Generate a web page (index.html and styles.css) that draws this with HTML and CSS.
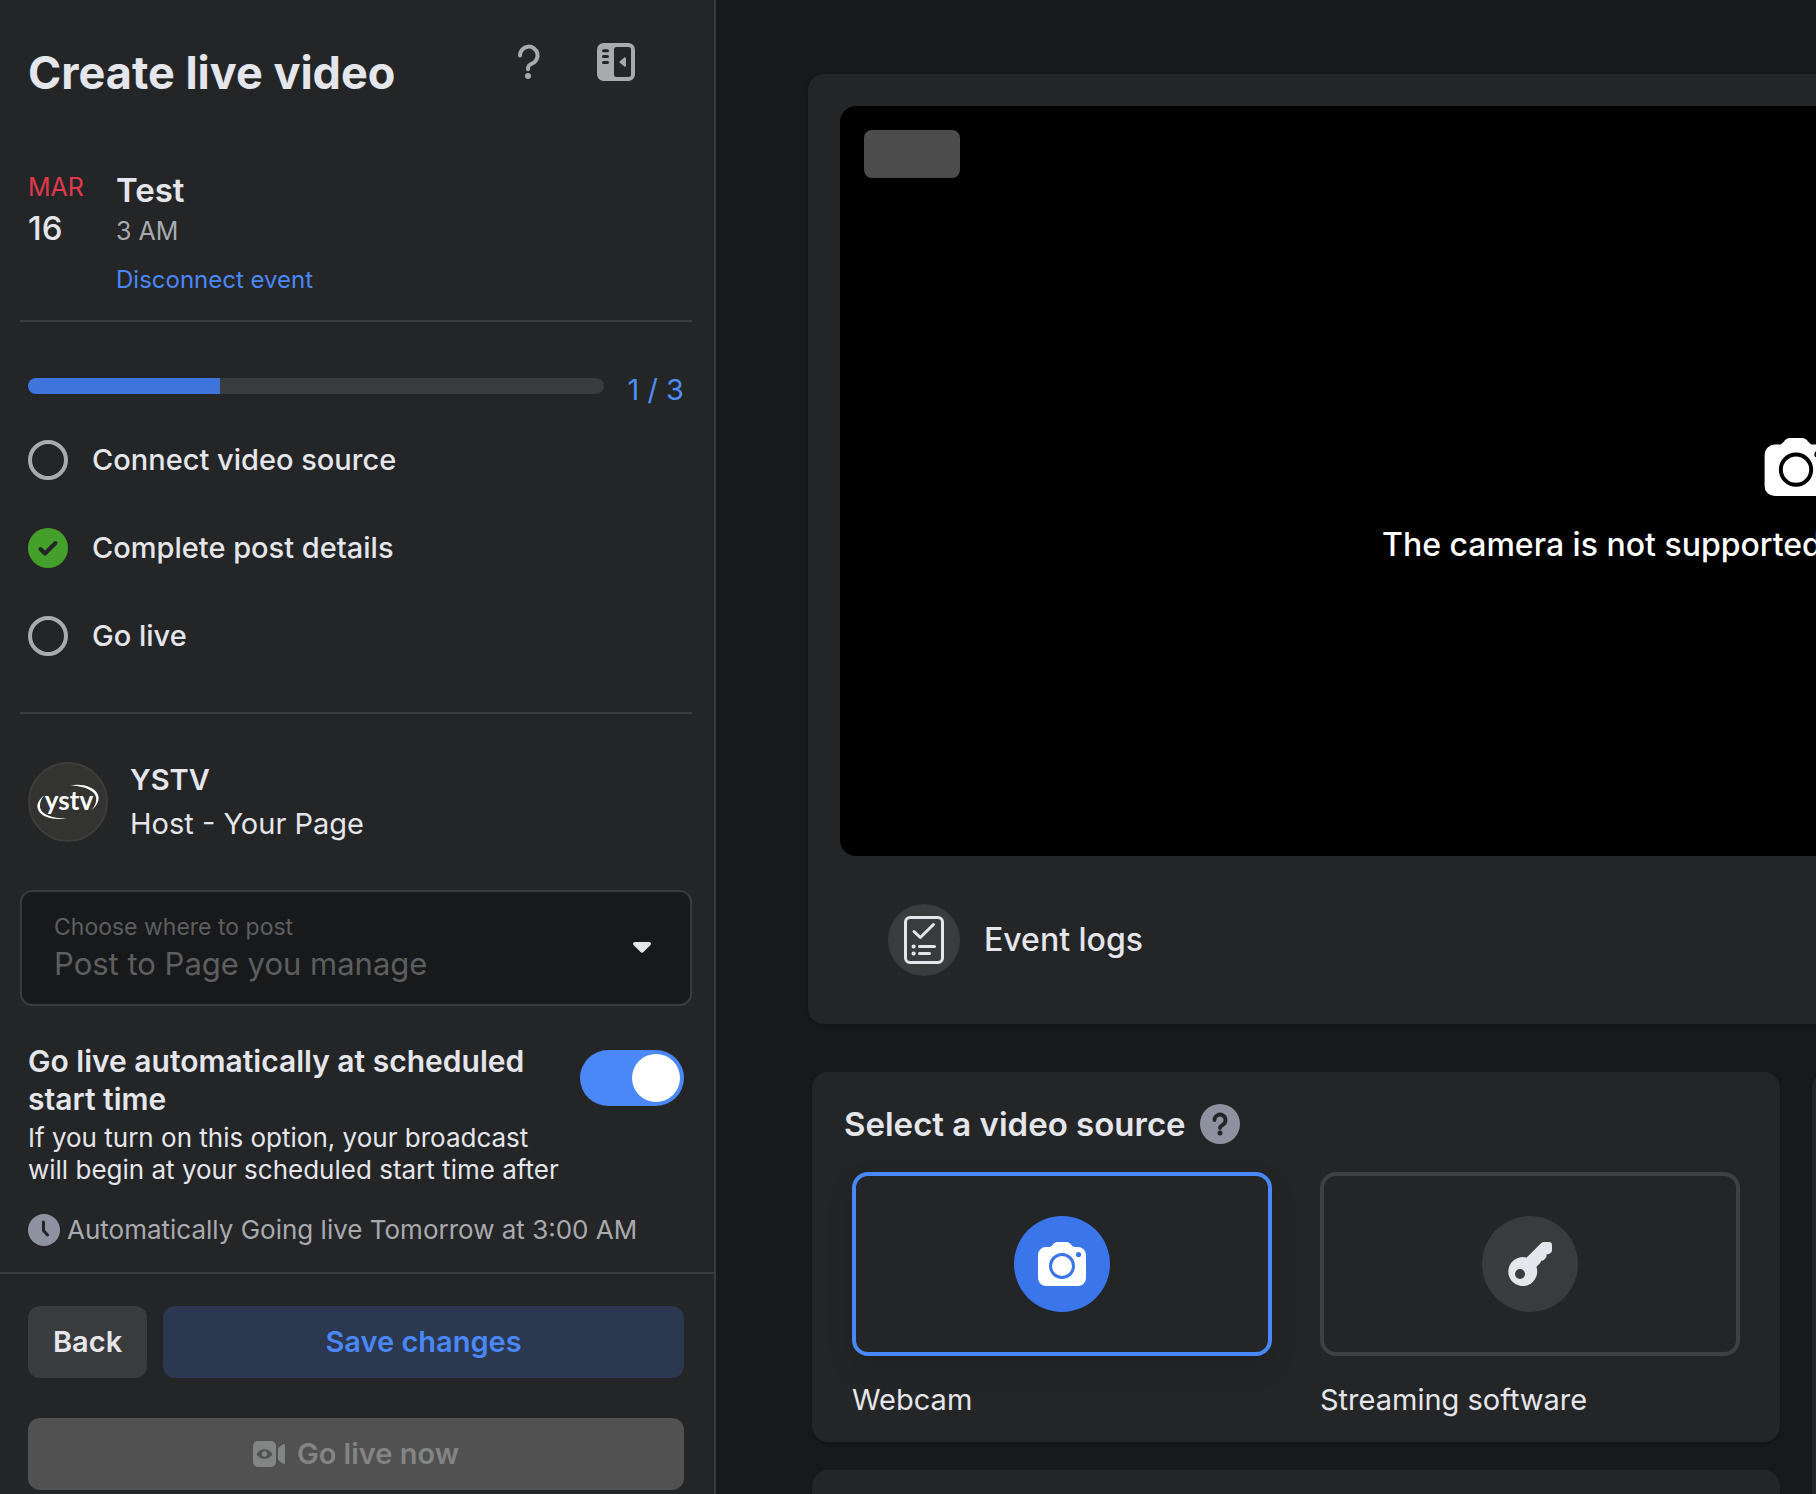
FILE: index.html
```html
<!DOCTYPE html>
<html lang="en">
<head>
<meta charset="utf-8">
<meta name="viewport" content="width=device-width, initial-scale=1">
<title>Create live video</title>
<link rel="stylesheet" href="styles.css">
</head>
<body>
<svg class="sprite" aria-hidden="true">
  <symbol id="icon-camera" viewBox="0 0 48 44">
    <path fill="#fff" d="M8 5h3c1.500 0 2.500-.8 3.500-2C16 1 17.500 0 19.500 0h9c2 0 3.500 1 5 3 1 1.200 2 2 3.500 2h3a8 8 0 0 1 8 8v23a8 8 0 0 1-8 8H8a8 8 0 0 1-8-8V13a8 8 0 0 1 8-8z"/>
    <circle cx="24" cy="24" r="11.500" fill="none" stroke="currentColor" stroke-width="3"/>
    <circle cx="40.500" cy="12.500" r="2.600" fill="currentColor"/>
  </symbol>
</svg>
<div class="shell">
  <aside class="sidebar">
    <header class="sidebar-header">
      <h1 class="title">Create live video</h1>
      <div class="header-actions">
        <button class="icon-button" type="button" aria-label="Help">
          <svg width="40" height="40" viewBox="0 0 40 40" aria-hidden="true">
            <path d="M12 13.500a8.800 8.800 0 1 1 11.500 8.300c-2.400.9-3.500 1.800-3.500 5.400" fill="none" stroke="#a8aab0" stroke-width="4" stroke-linecap="round"/>
            <circle cx="20" cy="34" r="3" fill="#a8aab0"/>
          </svg>
        </button>
        <button class="icon-button" type="button" aria-label="Collapse panel">
          <svg width="38" height="38" viewBox="0 0 38 38" aria-hidden="true">
            <rect width="38" height="38" rx="6.500" fill="#a8aab0"/>
            <rect x="17" y="4" width="17" height="30" rx="2.500" fill="#242526"/>
            <path d="M6.500 7.700h4M6.500 13.600h4M6.500 19.600h4" stroke="#242526" stroke-width="3" stroke-linecap="round"/>
            <path d="M28 15.300v7.400L23.500 19z" fill="#a8aab0" stroke="#a8aab0" stroke-width="2" stroke-linejoin="round"/>
          </svg>
        </button>
      </div>
    </header>

    <section class="event">
      <div class="event-date">
        <div class="event-month">MAR</div>
        <div class="event-day">16</div>
      </div>
      <div class="event-info">
        <h2 class="event-name">Test</h2>
        <div class="event-time">3 AM</div>
        <a class="event-link" href="#">Disconnect event</a>
      </div>
    </section>

    <section class="progress-section">
      <div class="progress-row">
        <div class="progress" role="progressbar" aria-label="Setup steps" aria-valuemin="0" aria-valuemax="3" aria-valuenow="1">
          <div class="progress-fill" style="width: 33.33%"></div>
        </div>
        <span class="progress-count">1 / 3</span>
      </div>
      <ul class="steps">
        <li class="step"><span class="step-ring"></span>Connect video source</li>
        <li class="step">
          <svg width="40" height="40" viewBox="0 0 40 40" aria-hidden="true">
            <circle cx="20" cy="20" r="20" fill="#45a02b"/>
            <path d="M12.500 21l4.500 4.500L27.500 15" fill="none" stroke="#242526" stroke-width="4" stroke-linecap="round" stroke-linejoin="round"/>
          </svg>
          Complete post details
        </li>
        <li class="step"><span class="step-ring"></span>Go live</li>
      </ul>
    </section>

    <section class="host">
      <svg width="80" height="80" viewBox="0 0 80 80" role="img" aria-label="YSTV logo">
        <circle cx="40" cy="40" r="39" fill="#333332" stroke="#3e3d3a" stroke-width="2"/>
        <text class="logo-text" x="41" y="48" text-anchor="middle">ystv</text>
        <path fill="#fff" d="M42 23.400C56 21 70 26 70.600 35.500c.2 5-3 9.500-7 12.500 3-3.500 5-7.500 4.600-12C67.500 28 55 23.600 42 23.400z"/>
        <path fill="#fff" d="M16 33.500C11.500 37 9 41 9.500 45.500 10.500 54 24 59 38.700 56.400 25 56.600 13 53 12 45c-.5-4.500 1.500-8.500 4-11.500z"/>
      </svg>
      <div>
        <div class="host-name">YSTV</div>
        <div class="host-role">Host - Your Page</div>
      </div>
    </section>

    <div class="field">
      <div class="field-main">
        <label class="field-label" for="destination">Choose where to post</label>
        <select class="field-select" id="destination">
          <option>Post to Page you manage</option>
        </select>
      </div>
      <svg width="18" height="11" viewBox="0 0 18 11" aria-hidden="true">
        <path d="M2 0h14c1.800 0 2.600 1.800 1.500 3l-7 7c-.9.9-2.100.9-3 0l-7-7C-.6 1.800.2 0 2 0z" fill="#e4e6eb"/>
      </svg>
    </div>

    <section class="auto">
      <div class="auto-row">
        <div class="auto-text">
          <label class="auto-title" for="auto-live">Go live automatically at scheduled start time</label>
          <p class="auto-note" id="auto-note">If you turn on this option, your broadcast will begin at your scheduled start time after</p>
        </div>
        <input class="switch" id="auto-live" type="checkbox" role="switch" aria-describedby="auto-note" checked>
      </div>
      <div class="auto-status">
        <svg width="32" height="32" viewBox="0 0 32 32" aria-hidden="true">
          <circle cx="16" cy="16" r="16" fill="#8e91a0"/>
          <path d="M15.500 8v8.500l4 4.500" fill="none" stroke="#242526" stroke-width="3" stroke-linecap="round" stroke-linejoin="round"/>
        </svg>
        Automatically Going live Tomorrow at 3:00 AM
      </div>
    </section>

    <footer class="footer">
      <div class="footer-row">
        <button class="button button-back" type="button">Back</button>
        <button class="button button-save" type="button">Save changes</button>
      </div>
      <button class="button button-live" type="button" disabled>
        <svg width="32" height="26" viewBox="0 0 32 26" aria-hidden="true">
          <rect width="23" height="26" rx="5" fill="#838484"/>
          <path d="M32 4.500v17c0 1.500-1 2-2 1.300L26.300 20c-.8-.6-1.300-1.300-1.300-2.300V8.300c0-1 .5-1.700 1.300-2.300L30 3.200c1-.7 2-.2 2 1.300z" fill="#838484"/>
          <path d="M3.500 13c4-6.500 12-6.500 16 0-4 6.500-12 6.500-16 0z" fill="#515151"/>
          <circle cx="11.500" cy="13" r="2.800" fill="#838484"/>
        </svg>
        Go live now
      </button>
    </footer>
  </aside>

  <main class="main">
    <div class="workspace">
      <section class="card preview">
        <div class="video">
          <div class="video-chip"></div>
          <div class="video-message">
            <svg class="video-camera" width="64" height="58" viewBox="0 0 48 44" aria-hidden="true"><use href="#icon-camera"/></svg>
            <p class="video-text">The camera is not supported</p>
          </div>
        </div>
        <button class="logs" type="button">
          <span class="logs-icon">
            <svg width="40" height="48" viewBox="0 0 40 48" fill="none" stroke="#e4e6eb" stroke-width="3" stroke-linecap="round" stroke-linejoin="round" aria-hidden="true">
              <rect x="1.500" y="1.500" width="37" height="45" rx="4.500"/>
              <path d="M10 15.500l6.300 6L29.500 8.500M15.500 30.500h15M15.500 37.500h10"/>
              <path d="M9.500 30.500h.2M9.500 37.500h.2" stroke-width="4"/>
            </svg>
          </span>
          Event logs
        </button>
      </section>

      <div class="columns">
        <div class="column">
          <section class="card source">
            <div class="source-header">
              <h2 class="source-title">Select a video source</h2>
              <button class="icon-button" type="button" aria-label="About video sources">
                <svg width="40" height="40" viewBox="0 0 40 40" aria-hidden="true">
                  <circle cx="20" cy="20" r="20" fill="#8e91a0"/>
                  <path d="M14.500 16a5.500 5.500 0 1 1 8.600 4.600c-2 1.300-3.100 1.900-3.100 3.400" fill="none" stroke="#242526" stroke-width="3.800" stroke-linecap="round"/>
                  <circle cx="20" cy="29" r="2.500" fill="#242526"/>
                </svg>
              </button>
            </div>
            <div class="source-options">
              <label class="option">
                <input class="option-input" type="radio" name="source" checked>
                <span class="option-tile">
                  <span class="option-icon">
                    <svg width="48" height="44" viewBox="0 0 48 44" aria-hidden="true"><use href="#icon-camera"/></svg>
                  </span>
                </span>
                Webcam
              </label>
              <label class="option">
                <input class="option-input" type="radio" name="source">
                <span class="option-tile">
                  <span class="option-icon">
                    <svg width="44" height="44" viewBox="0 0 44 44" aria-hidden="true">
                      <path fill="#e4e6eb" d="M18.700 15.600L32.500 1.800C33.700.5 34.600 0 36.500 0H41c2 0 3 1 3 3v5c0 1.200-.4 2-1.200 2.700-1.200 1-2.300 1.500-4.300 1.600.4 1.800 0 2.800-1 3.900l-1 1c-.9 1-2 1.500-3.300 1.600-.2 1.200-.9 2-1.800 2.900l-3 3a14.500 14.500 0 1 1-9.700-9.100z"/>
                      <circle cx="12" cy="32" r="5" fill="#3a3b3c"/>
                    </svg>
                  </span>
                </span>
                Streaming software
              </label>
            </div>
          </section>
          <section class="card card-empty"></section>
        </div>
        <section class="card"></section>
      </div>
    </div>
  </main>
</div>
</body>
</html>
```
FILE: styles.css
```css
* {
  box-sizing: border-box;
}

body {
  margin: 0;
  background: #18191a;
  color: #e4e6eb;
  font-family: Inter, "Liberation Sans", sans-serif;
  font-size: 29px;
  line-height: 40px;
}

h1,
h2,
p,
ul {
  margin: 0;
  padding: 0;
}

svg {
  display: block;
  flex: none;
}

button,
select {
  font: inherit;
  color: inherit;
}

.sprite {
  display: none;
}

.shell {
  display: flex;
  height: 100vh;
}

/* Sidebar */

.sidebar {
  flex: none;
  display: flex;
  flex-direction: column;
  width: 716px;
  overflow-y: auto;
  scrollbar-width: none;
  background: #242526;
  border-right: 2px solid #3a3b3c;
}

.sidebar-header {
  display: flex;
  justify-content: space-between;
  align-items: flex-start;
  padding: 42px 78px 68px 28px;
}

.title {
  margin-top: 4px;
  font-size: 45px;
  line-height: 54px;
  font-weight: 700;
}

.header-actions {
  display: flex;
  align-items: center;
  gap: 48px;
}

.icon-button {
  display: grid;
  place-items: center;
  width: 40px;
  height: 40px;
  padding: 0;
  border: 0;
  background: none;
}

.event {
  display: flex;
  margin: 0 22px 0 20px;
  padding: 0 8px 23px;
  border-bottom: 2px solid #3a3b3c;
}

.event-date {
  width: 88px;
}

.event-month {
  color: #e0394c;
  font-size: 25px;
  line-height: 38px;
}

.event-day {
  font-size: 33px;
  line-height: 45px;
  font-weight: 500;
}

.event-name {
  font-size: 33px;
  line-height: 45px;
  font-weight: 600;
}

.event-time {
  margin-bottom: 14px;
  color: #a8aab0;
  font-size: 25px;
  line-height: 36px;
}

.event-link {
  display: block;
  color: #4a87f7;
  font-size: 24px;
  line-height: 34px;
  text-decoration: none;
}

.progress-section {
  margin: 0 22px 0 20px;
  padding: 48px 8px 56px;
  border-bottom: 2px solid #3a3b3c;
}

.progress-row {
  display: flex;
  align-items: flex-start;
  gap: 24px;
  margin-bottom: 30px;
}

.progress {
  flex: 1;
  height: 16px;
  margin-top: 8px;
  overflow: hidden;
  border-radius: 8px;
  background: #3a3b3c;
}

.progress-fill {
  height: 100%;
  background: #3f74dc;
}

.progress-count {
  color: #4f8ff7;
}

.steps {
  display: grid;
  gap: 48px;
  list-style: none;
}

.step {
  display: flex;
  align-items: center;
  gap: 24px;
  font-weight: 500;
}

.step-ring {
  width: 40px;
  height: 40px;
  border: 4px solid #a8aab0;
  border-radius: 50%;
}

.host {
  display: flex;
  gap: 22px;
  padding: 48px 28px 44px;
}

.host-name,
.host-role {
  line-height: 44px;
}

.host-name {
  margin-top: -4px;
  font-weight: 600;
}

.logo-text {
  fill: #fff;
  font: 700 26px Lato, sans-serif;
}

.field {
  display: flex;
  align-items: center;
  margin: 0 22px 36px 20px;
  padding: 18px 39px 20px 32px;
  border: 2px solid #3a3b3c;
  border-radius: 12px;
  background: #18191a;
  color: #5d5e60;
}

.field-main {
  flex: 1;
}

.field-label {
  display: block;
  font-size: 23px;
  line-height: 34px;
}

.field-select {
  display: block;
  width: 100%;
  height: 40px;
  padding: 0;
  border: 0;
  appearance: none;
  background: none;
  font-size: 31px;
}

.auto {
  padding: 0 30px 26px 28px;
}

.auto-row {
  display: flex;
  align-items: flex-start;
  gap: 16px;
  margin-bottom: 28px;
}

.auto-text {
  flex: 1;
}

.auto-title {
  display: block;
  margin-bottom: 4px;
  font-size: 30px;
  line-height: 38px;
  font-weight: 600;
}

.auto-note {
  font-size: 26px;
  line-height: 32px;
}

.switch {
  flex: none;
  display: flex;
  justify-content: flex-end;
  width: 104px;
  height: 56px;
  margin: 8px 0 0;
  padding: 4px;
  appearance: none;
  border-radius: 28px;
  background: #4a87f7;
}

.switch::before {
  content: "";
  width: 48px;
  height: 48px;
  border-radius: 50%;
  background: #fff;
}

.switch:not(:checked) {
  justify-content: flex-start;
  background: #3a3b3c;
}

.auto-status {
  display: flex;
  align-items: center;
  gap: 7px;
  color: #a8aab0;
  font-size: 26px;
  line-height: 32px;
  white-space: nowrap;
}

.footer {
  display: grid;
  gap: 40px;
  padding: 32px 30px 4px 28px;
  border-top: 2px solid #3a3b3c;
}

.footer-row {
  display: flex;
  gap: 16px;
}

.button {
  display: flex;
  justify-content: center;
  align-items: center;
  gap: 12px;
  height: 72px;
  padding: 0 25px;
  border: 0;
  border-radius: 12px;
  font-weight: 600;
}

.button-back {
  background: #3a3b3c;
}

.button-save {
  flex: 1;
  background: #2b3850;
  color: #4a87f7;
}

.button-live {
  background: #515151;
  color: #838484;
}

/* Workspace */

.main {
  flex: 1;
  min-width: 0;
  padding: 74px 92px 0;
  overflow: auto;
  scrollbar-width: none;
}

.workspace {
  min-width: 1976px;
}

.card {
  border-radius: 16px;
  background: #242526;
  box-shadow: 0 2px 4px rgba(0, 0, 0, 0.2);
}

.preview {
  margin-bottom: 48px;
  padding: 32px 32px 48px;
}

.video {
  height: 750px;
  margin-bottom: 48px;
  padding: 24px;
  border-radius: 16px;
  background: #000;
}

.video-chip {
  width: 96px;
  height: 48px;
  border-radius: 8px;
  background: #4c4c4c;
}

.video-message {
  width: 828px;
  margin: 260px auto 0;
}

.video-camera {
  margin: 0 auto 28px;
  color: #000;
}

.video-text {
  color: #fff;
  font-size: 32px;
  line-height: 42px;
  font-weight: 500;
}

.logs {
  display: flex;
  align-items: center;
  gap: 24px;
  margin-left: 48px;
  padding: 0;
  border: 0;
  background: none;
  font-size: 32px;
  font-weight: 500;
}

.logs-icon {
  display: grid;
  place-items: center;
  width: 72px;
  height: 72px;
  border-radius: 50%;
  background: #3a3b3c;
}

.columns {
  display: grid;
  grid-template-columns: 1fr 1fr;
  gap: 32px;
  padding: 0 4px;
}

.column {
  display: grid;
  gap: 28px;
}

.source {
  padding: 32px 40px 22px;
}

.source-header {
  display: flex;
  align-items: center;
  gap: 14px;
  margin: 0 0 28px -8px;
}

.source-title {
  font-size: 33px;
  font-weight: 600;
}

.source-options {
  display: grid;
  grid-template-columns: 1fr 1fr;
  gap: 48px;
}

.option {
  display: block;
}

.option-input {
  position: absolute;
  opacity: 0;
}

.option-tile {
  display: grid;
  place-items: center;
  height: 184px;
  margin-bottom: 24px;
  border: 4px solid #3e3f41;
  border-radius: 16px;
}

.option-icon {
  display: grid;
  place-items: center;
  width: 96px;
  height: 96px;
  border-radius: 50%;
  background: #3a3b3c;
  color: #3a75ea;
}

.option-input:checked + .option-tile {
  border-color: #4a87f7;
  box-shadow: 0 12px 28px rgba(0, 0, 0, 0.1);
}

.option-input:checked + .option-tile .option-icon {
  background: #3a75ea;
}

.card-empty {
  min-height: 240px;
}
```
